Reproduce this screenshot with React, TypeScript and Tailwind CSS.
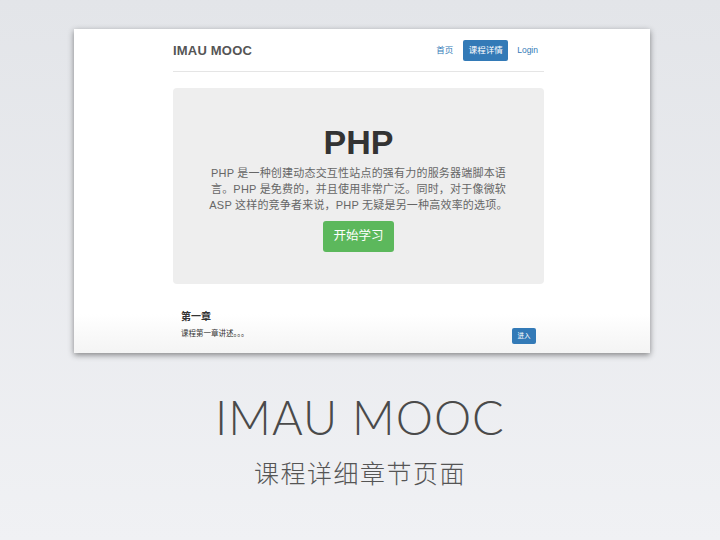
import React from 'react';

const cjk = { fontFamily: '"Helvetica Neue", "Liberation Sans", "Noto Sans CJK SC", sans-serif' };

function NavBar() {
  return (
    <div className="flex items-center justify-between h-[43px] border-b border-[#e5e5e5]">
      <div className="text-[13px] font-bold text-[#555] tracking-[0.2px] pt-[1px]">IMAU MOOC</div>
      <div className="flex items-center text-[8.5px] mr-[6px]">
        <span className="text-[#337ab7] mr-[10px]">首页</span>
        <span className="bg-[#337ab7] text-white rounded-[2px] w-[45px] h-[21px] flex items-center justify-center mr-[9px]">
          课程详情
        </span>
        <span className="text-[#337ab7]">Login</span>
      </div>
    </div>
  );
}

function Jumbotron() {
  return (
    <div className="mt-[16px] bg-[#eeeeee] rounded-[4px] h-[196px] flex flex-col items-center pt-[34px]">
      <div className="text-[34px] font-bold text-[#333] leading-[40px]">PHP</div>
      <p className="text-center text-[11px] leading-[16px] text-[#666] mt-[3px] whitespace-nowrap tracking-[0.2px]">
        PHP 是一种创建动态交互性站点的强有力的服务器端脚本语
        <br />
        言。PHP 是免费的，并且使用非常广泛。同时，对于像微软
        <br />
        ASP 这样的竞争者来说，PHP 无疑是另一种高效率的选项。
      </p>
      <div className="mt-[8px] w-[71px] h-[31px] rounded-[3px] bg-[#5cb85c] text-white text-[12.5px] flex items-center justify-center">
        开始学习
      </div>
    </div>
  );
}

function Chapter() {
  return (
    <div className="px-[8px] pt-[26px]">
      <div className="text-[10px] leading-[14px] font-bold text-[#333]">第一章</div>
      <div className="flex items-center justify-between">
        <div className="text-[7.5px] text-[#333]">课程第一章讲述。。。</div>
        <div className="w-[24px] h-[16px] rounded-[2px] bg-[#337ab7] text-white text-[6.5px] flex items-center justify-center mt-[4px]">
          进入
        </div>
      </div>
    </div>
  );
}

export default function App() {
  return (
    <div
      className="w-[720px] h-[540px] bg-gradient-to-b from-[#e3e5e9] to-[#f0f1f4] flex flex-col items-center overflow-hidden"
      style={cjk}
    >
      <div className="mt-[29px] ml-[4px] w-[576px] h-[324px] bg-gradient-to-b from-white from-[88%] to-[#f4f4f4] shadow-[0_2px_6px_rgba(0,0,0,0.45)] overflow-hidden">
        <div className="w-[371px] ml-[99px]">
          <NavBar />
          <Jumbotron />
          <Chapter />
        </div>
      </div>
      <div
        className="mt-[34px] text-[47px] leading-[60px] font-light text-[#4a4a4a] tracking-[1px]"
        style={{ fontFamily: 'Lato, "Open Sans", "Liberation Sans", sans-serif' }}
      >
        IMAU MOOC
      </div>
      <div
        className="mt-[9px] text-[25px] leading-[32px] font-light text-[#555] tracking-[1.5px]"
        style={{ fontFamily: '"Noto Sans CJK SC", sans-serif' }}
      >
        课程详细章节页面
      </div>
    </div>
  );
}
